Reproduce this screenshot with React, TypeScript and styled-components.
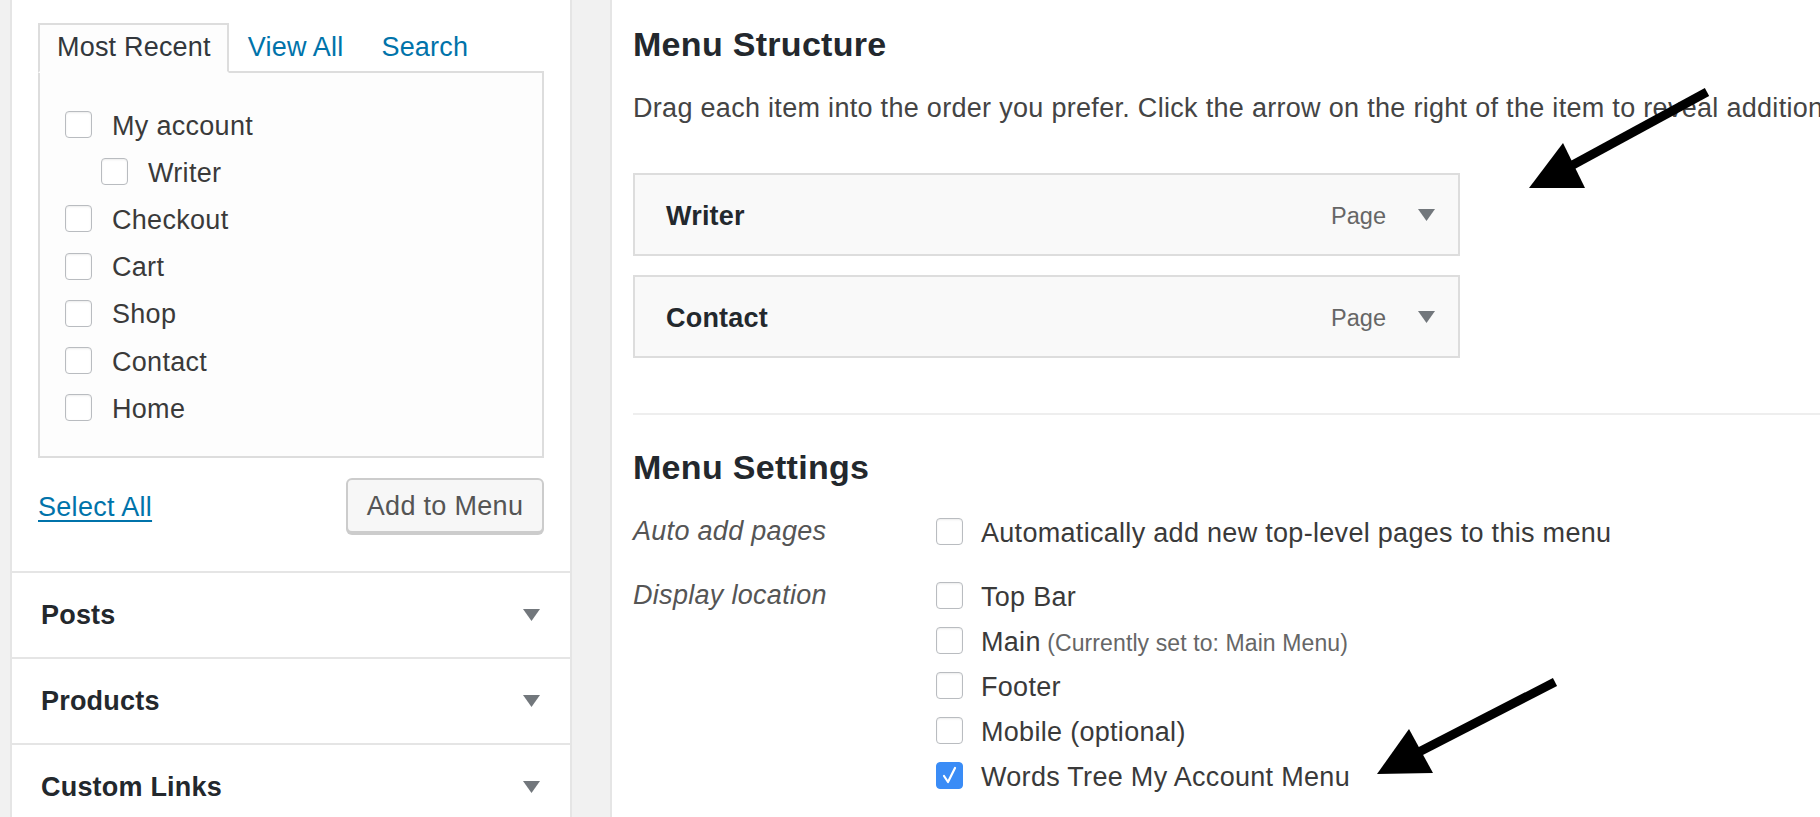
import React from "react";
import styled, { createGlobalStyle } from "styled-components";

const GlobalStyle = createGlobalStyle`
  html, body { margin: 0; padding: 0; }
  body {
    background: #f1f1f1;
    font-family: "Liberation Sans", Arial, sans-serif;
    color: #444;
  }
  * { box-sizing: border-box; }
`;

const Page = styled.div`
  position: relative;
  display: flex;
  align-items: stretch;
  width: 1820px;
  height: 817px;
  overflow: hidden;
`;

const Sidebar = styled.aside`
  flex: 0 0 562px;
  margin-left: 10px;
  background: #fff;
  border-left: 2px solid #e5e5e5;
  border-right: 2px solid #e5e5e5;
  display: flex;
  flex-direction: column;
  overflow: hidden;
`;

const PagesBox = styled.div`
  flex-shrink: 0;
  padding: 23px 26px 38px;
`;

const TabRow = styled.div`
  display: flex;
  height: 50px;
`;

const Tab = styled.div<{ $active?: boolean }>`
  font-size: 27px;
  line-height: 27px;
  letter-spacing: 0.2px;
  white-space: nowrap;
  ${(p) =>
    p.$active
      ? `
    padding: 9px 16px 0 17px;
    border: 2px solid #ddd;
    border-bottom-color: #fdfdfd;
    background: #fdfdfd;
    color: #32373c;
  `
      : `
    padding: 11px 19px 0 19px;
    border-bottom: 2px solid #ddd;
    color: #0073aa;
  `}
`;

const TabFiller = styled.div`
  flex: 1;
  border-bottom: 2px solid #ddd;
`;

const TabPanel = styled.div`
  border: 2px solid #ddd;
  border-top: none;
  background: #fdfdfd;
  padding: 28px 25px 25px;
`;

const ItemRow = styled.label<{ $indent?: boolean }>`
  display: flex;
  align-items: center;
  gap: 20px;
  height: 47.2px;
  padding-left: ${(p) => (p.$indent ? "36px" : "0")};
`;

const Box = styled.span<{ $checked?: boolean }>`
  flex: 0 0 27px;
  width: 27px;
  height: 27px;
  border-radius: 4px;
  display: flex;
  align-items: center;
  justify-content: center;
  border: 1px solid ${(p) => (p.$checked ? "#3a8cf6" : "#b9bcc0")};
  background: ${(p) => (p.$checked ? "#3a8cf6" : "#fff")};
  box-shadow: ${(p) => (p.$checked ? "none" : "inset 0 1px 2px rgba(0,0,0,0.08)")};
`;

const ItemText = styled.span`
  font-size: 27px;
  line-height: 27px;
  letter-spacing: 0.3px;
  margin-top: 3px;
  color: #3a3a3a;
  white-space: nowrap;
`;

const Actions = styled.div`
  margin-top: 20px;
  height: 55px;
  display: flex;
  align-items: center;
  justify-content: space-between;
`;

const SelectAll = styled.a`
  font-size: 27px;
  line-height: 27px;
  letter-spacing: 0.3px;
  margin-top: 4px;
  color: #0073aa;
  text-decoration: underline;
  text-decoration-thickness: 2px;
  text-underline-offset: 4px;
`;

const Button = styled.button`
  width: 198px;
  height: 55px;
  padding: 2px 0 0;
  border: 2px solid #ccc;
  border-radius: 6px;
  background: #f7f7f7;
  box-shadow: 0 2px 0 #ccc;
  color: #555;
  font-family: inherit;
  font-size: 27px;
  line-height: 27px;
  letter-spacing: 0.3px;
`;

const Accordion = styled.div`
  flex-shrink: 0;
  height: 86px;
  border-top: 2px solid #e5e5e5;
  padding: 0 30px 0 29px;
  display: flex;
  align-items: center;
  justify-content: space-between;
`;

const AccordionTitle = styled.span`
  font-size: 27px;
  font-weight: bold;
  letter-spacing: 0.2px;
  color: #23282d;
`;

const Main = styled.main`
  flex: 1;
  min-width: 0;
  margin-left: 38px;
  background: #fff;
  border-left: 2px solid #e5e5e5;
  padding: 24px 0 0 21px;
  overflow: hidden;
`;

const Heading = styled.h2<{ $gap?: number }>`
  margin: ${(p) => p.$gap ?? 0}px 0 0;
  font-size: 34px;
  line-height: 40px;
  letter-spacing: 0.3px;
  font-weight: bold;
  color: #23282d;
  white-space: nowrap;
`;

const Description = styled.p`
  margin: 26px 0 0;
  font-size: 27px;
  line-height: 36px;
  letter-spacing: 0.3px;
  color: #444;
  white-space: nowrap;
`;

const MenuList = styled.div`
  margin-top: 47px;
  width: 827px;
  display: flex;
  flex-direction: column;
  gap: 19px;
`;

const MenuItem = styled.div`
  height: 83px;
  border: 2px solid #ddd;
  background: #f9f9f9;
  display: flex;
  align-items: center;
  padding: 0 23px 0 31px;
`;

const MenuItemTitle = styled.span`
  flex: 1;
  font-size: 27px;
  line-height: 27px;
  margin-top: 3px;
  letter-spacing: 0.2px;
  font-weight: bold;
  color: #23282d;
`;

const MenuItemType = styled.span`
  font-size: 23.5px;
  line-height: 27px;
  margin-top: 3px;
  color: #666;
  margin-right: 32px;
`;

const Divider = styled.hr`
  margin: 55px 0 0;
  border: none;
  height: 2px;
  background: #eee;
`;

const SettingsGrid = styled.div`
  margin-top: 22px;
  display: grid;
  grid-template-columns: 303px 1fr;
  row-gap: 19px;
`;

const SettingLabel = styled.div`
  font-size: 27px;
  line-height: 45px;
  letter-spacing: 0.3px;
  font-style: italic;
  color: #555;
  white-space: nowrap;
`;

const OptionList = styled.div`
  display: flex;
  flex-direction: column;
`;

const OptionRow = styled.label`
  display: flex;
  align-items: center;
  gap: 18px;
  height: 45px;
`;

const OptionText = styled.span`
  font-size: 27px;
  line-height: 27px;
  letter-spacing: 0.3px;
  margin-top: 4px;
  color: #3a3a3a;
  white-space: nowrap;
`;

const Note = styled.span`
  font-size: 23px;
  letter-spacing: 0.1px;
  color: #666;
`;

const ArrowSvg = styled.svg<{ $left: number; $top: number }>`
  position: absolute;
  left: ${(p) => p.$left}px;
  top: ${(p) => p.$top}px;
  width: 220px;
  height: 125px;
  z-index: 2;
  pointer-events: none;
`;

const Caret = ({ color = "#72777c" }: { color?: string }) => (
  <svg width="17" height="12" viewBox="0 0 17 12">
    <polygon points="0,0 17,0 8.5,12" fill={color} />
  </svg>
);

const Check = ({ checked }: { checked?: boolean }) => (
  <Box $checked={checked}>
    {checked && (
      <svg width="17" height="19" viewBox="0 0 17 19">
        <polyline
          points="3,10 7,16 14,2"
          fill="none"
          stroke="#fff"
          strokeWidth="2.2"
          strokeLinecap="round"
          strokeLinejoin="round"
        />
      </svg>
    )}
  </Box>
);

const Arrow = ({
  left,
  top,
  tail,
  tip,
  a,
  b,
  shaftEnd,
}: {
  left: number;
  top: number;
  tail: [number, number];
  tip: [number, number];
  a: [number, number];
  b: [number, number];
  shaftEnd: [number, number];
}) => (
  <ArrowSvg $left={left} $top={top} viewBox="0 0 220 125">
    <line
      x1={tail[0]}
      y1={tail[1]}
      x2={shaftEnd[0]}
      y2={shaftEnd[1]}
      stroke="#000"
      strokeWidth="9"
    />
    <polygon points={`${tip[0]},${tip[1]} ${a[0]},${a[1]} ${b[0]},${b[1]}`} fill="#000" />
  </ArrowSvg>
);

const pages = [
  { name: "My account" },
  { name: "Writer", indent: true },
  { name: "Checkout" },
  { name: "Cart" },
  { name: "Shop" },
  { name: "Contact" },
  { name: "Home" },
];

const locations = ["Top Bar", "Main", "Footer", "Mobile (optional)", "Words Tree My Account Menu"];

export default function App() {
  return (
    <>
      <GlobalStyle />
      <Page>
        <Sidebar>
          <PagesBox>
            <TabRow>
              <Tab $active>Most Recent</Tab>
              <Tab>View All</Tab>
              <Tab>Search</Tab>
              <TabFiller />
            </TabRow>
            <TabPanel>
              {pages.map((p) => (
                <ItemRow key={p.name} $indent={p.indent}>
                  <Check />
                  <ItemText>{p.name}</ItemText>
                </ItemRow>
              ))}
            </TabPanel>
            <Actions>
              <SelectAll href="#">Select All</SelectAll>
              <Button>Add to Menu</Button>
            </Actions>
          </PagesBox>
          {["Posts", "Products", "Custom Links"].map((t) => (
            <Accordion key={t}>
              <AccordionTitle>{t}</AccordionTitle>
              <Caret />
            </Accordion>
          ))}
        </Sidebar>

        <Main>
          <Heading>Menu Structure</Heading>
          <Description>
            Drag each item into the order you prefer. Click the arrow on the right of the item to reveal additional configuration options.
          </Description>
          <MenuList>
            {["Writer", "Contact"].map((t) => (
              <MenuItem key={t}>
                <MenuItemTitle>{t}</MenuItemTitle>
                <MenuItemType>Page</MenuItemType>
                <Caret />
              </MenuItem>
            ))}
          </MenuList>
          <Divider />
          <Heading $gap={32}>Menu Settings</Heading>
          <SettingsGrid>
            <SettingLabel>Auto add pages</SettingLabel>
            <OptionList>
              <OptionRow>
                <Check />
                <OptionText>Automatically add new top-level pages to this menu</OptionText>
              </OptionRow>
            </OptionList>
            <SettingLabel>Display location</SettingLabel>
            <OptionList>
              {locations.map((l, i) => (
                <OptionRow key={l}>
                  <Check checked={i === locations.length - 1} />
                  <OptionText>
                    {l}
                    {l === "Main" && <Note> (Currently set to: Main Menu)</Note>}
                  </OptionText>
                </OptionRow>
              ))}
            </OptionList>
          </SettingsGrid>
        </Main>

        <Arrow
          left={1510}
          top={80}
          tail={[197, 12]}
          tip={[19, 108]}
          a={[53, 63]}
          b={[75, 108]}
          shaftEnd={[59, 87]}
        />
        <Arrow
          left={1360}
          top={670}
          tail={[195, 12]}
          tip={[17, 104]}
          a={[49, 59]}
          b={[73, 103]}
          shaftEnd={[57, 83]}
        />
      </Page>
    </>
  );
}
